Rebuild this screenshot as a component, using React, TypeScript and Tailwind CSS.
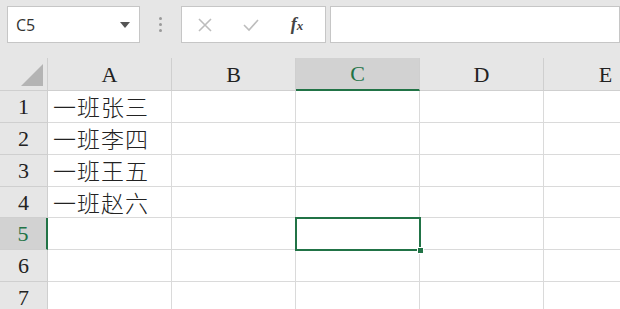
const cols = ["A", "B", "C", "D", "E"];
const rows = [
  { n: 1, a: "一班张三", h: "h-[32px]" },
  { n: 2, a: "一班李四", h: "h-[32px]" },
  { n: 3, a: "一班王五", h: "h-[32px]" },
  { n: 4, a: "一班赵六", h: "h-[31px]" },
  { n: 5, a: "", h: "h-[32px]" },
  { n: 6, a: "", h: "h-[32px]" },
  { n: 7, a: "", h: "h-[32px]" },
];

const serif = "font-['Liberation_Serif','Noto_Sans_CJK_SC',serif]";

const Toolbar = () => (
  <div className="flex h-[58px] items-start bg-[#e6e6e6] pt-[6px] pl-[7px]">
    <div className="flex h-[37px] w-[133px] shrink-0 items-center justify-between border border-[#c6c6c6] bg-white pl-[8px] pr-[9px]">
      <span className="font-['Open_Sans',sans-serif] text-[16px] text-[#333]">C5</span>
      <svg width="10" height="6" viewBox="0 0 10 6">
        <path d="M0 0 L10 0 L5 6 Z" fill="#555" />
      </svg>
    </div>
    <div className="flex h-[37px] w-[41px] shrink-0 flex-col items-center justify-center gap-[3px]">
      <span className="h-[3px] w-[3px] rounded-full bg-[#9a9a9a]" />
      <span className="h-[3px] w-[3px] rounded-full bg-[#9a9a9a]" />
      <span className="h-[3px] w-[3px] rounded-full bg-[#9a9a9a]" />
    </div>
    <div className="flex h-[37px] w-[145px] shrink-0 items-center border border-[#c6c6c6] bg-white">
      <div className="flex w-[46px] justify-center">
        <svg width="14" height="14" viewBox="0 0 14 14">
          <path d="M1 1 L13 13 M13 1 L1 13" stroke="#bdbdbd" strokeWidth="1.6" />
        </svg>
      </div>
      <div className="flex w-[46px] justify-center">
        <svg width="16" height="14" viewBox="0 0 16 14">
          <path d="M1 7 L6 12 L15 2" stroke="#bdbdbd" strokeWidth="1.6" fill="none" />
        </svg>
      </div>
      <div className="flex w-[46px] justify-center">
        <span className="font-['Liberation_Serif',serif] text-[18px] font-bold italic text-[#444]">
          f<span className="text-[13px]">x</span>
        </span>
      </div>
    </div>
    <div className="ml-[4px] h-[37px] flex-1 border border-[#c6c6c6] bg-white" />
  </div>
);

const Corner = () => (
  <div className="flex h-[33px] w-[48px] shrink-0 items-end justify-end border-r border-b border-[#cfcfcf] bg-[#e6e6e6] pr-[4px] pb-[4px]">
    <svg width="22" height="22" viewBox="0 0 22 22">
      <path d="M22 0 L22 22 L0 22 Z" fill="#b4b4b4" />
    </svg>
  </div>
);

export default function App() {
  return (
    <div className="h-[309px] w-[620px] overflow-hidden bg-white">
      <Toolbar />
      <div className="relative">
        <div className="flex">
          <Corner />
          {cols.map((c) => (
            <div
              key={c}
              className={`flex h-[33px] w-[124px] shrink-0 items-center justify-center border-r border-[#cfcfcf] ${serif} text-[22px] ${
                c === "C"
                  ? "border-b-2 border-b-[#217346] bg-[#d2d2d2] text-[#217346]"
                  : "border-b border-b-[#cfcfcf] bg-[#e6e6e6] text-[#222]"
              }`}
            >
              {c}
            </div>
          ))}
        </div>
        {rows.map((r) => (
          <div key={r.n} className={`flex ${r.h}`}>
            <div
              className={`flex w-[48px] shrink-0 items-center justify-center border-b border-[#cfcfcf] ${serif} text-[22px] ${
                r.n === 5
                  ? "border-r-2 border-r-[#217346] bg-[#d2d2d2] text-[#217346]"
                  : "border-r border-r-[#cfcfcf] bg-[#e6e6e6] text-[#222]"
              }`}
            >
              {r.n}
            </div>
            {cols.map((c) => (
              <div
                key={c}
                className="flex w-[124px] shrink-0 items-center border-r border-b border-[#dadada] pl-[5px]"
              >
                {c === "A" && (
                  <span className="font-['Noto_Sans_CJK_SC',sans-serif] text-[23px] font-light leading-none tracking-[1px] text-[#222]">
                    {r.a}
                  </span>
                )}
              </div>
            ))}
          </div>
        ))}
        <div className="absolute left-[295px] top-[159px] h-[34px] w-[126px] border-2 border-[#217346]">
          <div className="absolute -right-[5px] -bottom-[5px] h-[7px] w-[7px] border border-white bg-[#217346]" />
        </div>
      </div>
    </div>
  );
}
